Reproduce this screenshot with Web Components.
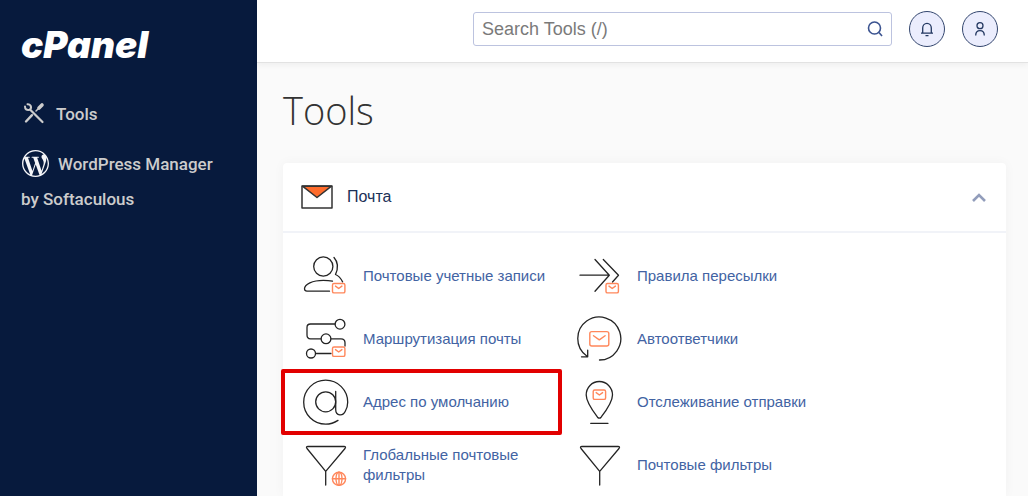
<!DOCTYPE html>
<html lang="ru">
<head>
<meta charset="utf-8">
<meta name="viewport" content="width=device-width, initial-scale=1">
<title>cPanel - Tools</title>
<style>
  body { margin: 0; font-family: "Liberation Sans", Arial, sans-serif; font-size: 16px; background: #fafafa; }
</style>
</head>
<body>
<cp-app>
  <cp-sidebar slot="side">
    <cp-nav-link icon="tools">Tools</cp-nav-link>
    <cp-nav-link icon="wordpress">WordPress Manager by Softaculous</cp-nav-link>
  </cp-sidebar>
  <cp-topbar slot="top"></cp-topbar>
  <cp-heading>Tools</cp-heading>
  <cp-group>
    <span slot="title">Почта</span>
    <cp-tool icon="accounts">Почтовые учетные записи</cp-tool>
    <cp-tool icon="forward">Правила пересылки</cp-tool>
    <cp-tool icon="routing">Маршрутизация почты</cp-tool>
    <cp-tool icon="reply">Автоответчики</cp-tool>
    <cp-tool icon="at" marked>Адрес по умолчанию</cp-tool>
    <cp-tool icon="track">Отслеживание отправки</cp-tool>
    <cp-tool icon="globalfilter">Глобальные почтовые фильтры</cp-tool>
    <cp-tool icon="filter">Почтовые фильтры</cp-tool>
  </cp-group>
</cp-app>
<script>
const smallMail = (x, y) => `<g class="o"><rect x="${x}" y="${y}" width="12.4" height="9.4" rx="1.5"/><path d="M${x + 3} ${y + 2.6}l3.2 2.4 3.2-2.4"/></g>`;
const funnel = '<path d="M7 5.5H43q2.4 0 1 2L24.7 30.3 6 7.5q-1.400-2 1-2zM24.700 30.300V44"/>';
const toolIcons = {
  accounts: '<circle cx="22.300" cy="14.500" r="9.600"/><path d="M33 5.500c4.200 4.700 4.200 11 1.500 17 3 1.200 5.400 4 7.100 7.400M28.500 39.200H6q-2.500 0-2.500-2.400c0-4.700 8-8.500 18.800-8.500q5 0 9.200.9"/>' + smallMail(31.500, 31.500),
  routing: '<circle cx="39" cy="9.200" r="4.900"/><circle cx="25" cy="23.800" r="4.900"/><circle cx="10" cy="38.500" r="4.500"/><path d="M34 9H9.500Q6 9 6 12.500V20q0 3.800 3.500 3.800H20M30 23.800H40q4 0 4 4V31M14.700 38.500H30"/>' + smallMail(31.500, 32),
  at: '<circle cx="24.700" cy="23.800" r="10"/><path d="M34.700 13.500V31.500c0 6.800 7.500 6.800 9.700 1.500 1.700-3 2.300-6 2.300-8.800a22 22 0 1 0-22 22q6.500 0 12.300-3.800"/>',
  globalfilter: funnel + '<g class="o"><circle cx="38" cy="37.800" r="6.600"/><ellipse cx="38" cy="37.800" rx="3" ry="6.600"/><path d="M31.500 37.800h13M38 31.200v13.200"/></g>',
  filter: funnel,
  forward: '<path d="M5 23.200H34.300M20 7.500L34.300 23.200 20 39.200M28.300 7.500L43.500 23.200 37.500 30"/>' + smallMail(31, 31.500),
  reply: '<path d="M24.500 45A21.500 21.500 0 1 0 11.500 40.800M12.700 35.200V41.800H6.500"/><g class="o"><rect x="14.800" y="16.600" width="19" height="14.400" rx="2"/><path d="M18.500 20.700l5.800 4.200 5.800-4.200"/></g>',
  track: '<path d="M24.300 3.500C17 3.500 11.200 9.500 11.200 17c0 7 7 16.500 11.300 22.200q1.800 2 3.600 0C30.500 33.500 37.500 24 37.500 17c0-7.500-5.900-13.500-13.200-13.500zM15.700 45.300H33"/>' + smallMail(18.2, 12)
};
const navIcons = {
  tools: '<svg width="22" height="22" viewBox="0 0 22 22" fill="none" stroke="#ccc" stroke-linecap="round"><path d="M2 4.500Q2 8.500 6.500 7.800Q9 6.500 7.500 3.500Q6.500 2 4.500 2.200" stroke-width="2"/><path d="M7.500 8L19.500 20" stroke-width="2.200"/><path d="M9 13.200L3 19.500" stroke-width="2.400"/><path d="M13 9L16 6" stroke-width="1.500"/><path d="M16 6L19 3" stroke-width="3.600"/></svg>',
  wordpress: '<svg width="27" height="27" viewBox="0 0 24 24" fill="#f4f5f8"><path d="M21.469 6.825c.84 1.537 1.318 3.300 1.318 5.175 0 3.979-2.156 7.456-5.363 9.325l3.295-9.527c.615-1.540.82-2.771.82-3.864 0-.405-.026-.78-.07-1.110m-7.981.105c.647-.03 1.232-.105 1.232-.105.582-.075.514-.93-.067-.899 0 0-1.755.135-2.880.135-1.064 0-2.850-.15-2.850-.15-.585-.03-.661.855-.075.885 0 0 .54.061 1.125.09l1.680 4.605-2.370 7.080L5.354 6.900c.649-.03 1.234-.1 1.234-.1.585-.075.516-.93-.065-.896 0 0-1.746.138-2.874.138-.2 0-.438-.008-.69-.015C4.911 3.150 8.235 1.215 12 1.215c2.809 0 5.365 1.072 7.286 2.833-.046-.003-.091-.009-.141-.009-1.060 0-1.812.923-1.812 1.914 0 .89.513 1.643 1.060 2.531.411.72.89 1.643.89 2.977 0 .915-.354 1.994-.821 3.479l-1.075 3.585-3.900-11.610.001.014zM12 22.784c-1.059 0-2.081-.153-3.048-.437l3.237-9.406 3.315 9.087c.024.053.05.101.078.149-1.120.393-2.325.609-3.582.609M1.211 12c0-1.564.336-3.050.935-4.390L7.290 21.709C3.694 19.960 1.212 16.271 1.211 12M12 0C5.385 0 0 5.385 0 12s5.385 12 12 12 12-5.385 12-12S18.615 0 12 0"/></svg>'
};

function define(name, render) {
  customElements.define(name, class extends HTMLElement {
    constructor() { super(); this.attachShadow({ mode: 'open' }); }
    connectedCallback() {
      const t = document.createElement('template');
      t.innerHTML = render(this);
      this.shadowRoot.replaceChildren(t.content.cloneNode(true));
    }
  });
}

define('cp-app', () => `
<style>
  :host { display: grid; grid-template-columns: 257px minmax(0, 1fr); min-height: 100vh; }
  .body { display: flex; flex-direction: column; }
  main { flex: 1; display: flex; flex-direction: column; padding: 19px 22px 0 26px; }
</style>
<slot name="side"></slot>
<div class="body"><slot name="top"></slot><main><slot></slot></main></div>`);

define('cp-sidebar', () => `
<style>
  :host { display: block; background: #071a3d; padding: 23px 32px 24px 21px; }
  .logo { display: block; margin-bottom: 30px; color: #fff; font: italic 900 37px/44px Inter, sans-serif; text-decoration: none; }
  nav { display: flex; flex-direction: column; gap: 15px; }
</style>
<a class="logo" href="#">cPanel</a>
<nav><slot></slot></nav>`);

define('cp-nav-link', el => `
<style>
  :host { display: block; }
  a { display: block; color: #ccc; font: 500 17px/35px Roboto, sans-serif; text-decoration: none; }
  svg { vertical-align: -7px; margin: 0 9px 0 1px; }
  :host([icon="tools"]) svg { vertical-align: -4px; margin: 0 11px 0 2px; }
</style>
<a href="#">${navIcons[el.getAttribute('icon')]}<slot></slot></a>`);

define('cp-topbar', () => `
<style>
  :host { display: flex; align-items: center; justify-content: flex-end; gap: 17px; box-sizing: border-box; height: 63px; padding: 0 30px 5px; background: #fff; border-bottom: 1px solid #e2e2e2; box-shadow: 0 2px 6px #0000000d; }
  .search { display: flex; box-sizing: border-box; width: 419px; height: 34px; border: 1px solid #bcc3df; border-radius: 3px; background: #fff; }
  input { flex: 1; min-width: 0; padding: 0 8px; border: 0; background: none; font: 18px/32px "Liberation Sans", Arial, sans-serif; outline: 0; }
  input::placeholder { color: #7a7a7a; opacity: 1; }
  button { display: grid; place-items: center; padding: 0; border: 0; background: none; }
  .search button { width: 32px; }
  .round { width: 36px; height: 36px; border: 1px solid #33466e; border-radius: 50%; background: #ebedfd; }
  svg { fill: none; stroke: #243962; }
</style>
<form class="search" role="search">
  <input type="text" aria-label="Search Tools" placeholder="Search Tools (/)">
  <button type="button" aria-label="Search"><svg width="18" height="18" viewBox="0 0 18 18" style="stroke:#3b5390" stroke-width="1.600"><circle cx="8.500" cy="8" r="6"/><path d="M13 12.500L16 16"/></svg></button>
</form>
<button class="round" aria-label="Notifications"><svg width="16" height="18" viewBox="0 0 16 18" stroke-width="1.300"><path d="M2 13.200H14M3.700 13V8a4.300 4.600 0 0 1 8.600 0v5M6.500 15.700h3"/></svg></button>
<button class="round" aria-label="Account"><svg width="16" height="18" viewBox="0 0 16 18" stroke-width="1.300"><circle cx="8" cy="5.700" r="3"/><path d="M3.700 15.500c0-6.500 8.600-6.500 8.600 0"/></svg></button>`);

define('cp-heading', () => `
<style>
  :host { display: block; }
  h1 { margin: 0 0 25px; color: #333; font: 300 38px/56px "Open Sans", sans-serif; }
</style>
<h1><slot></slot></h1>`);

define('cp-group', () => `
<style>
  :host { display: block; flex: 1; background: #fff; border-radius: 4px 4px 0 0; box-shadow: 0 0 12px #0000000a; }
  header { display: flex; align-items: center; gap: 14px; height: 68px; padding: 0 18px; border-bottom: 2px solid #f1f3f8; }
  h2 { flex: 1; margin: 0; color: #1b3157; font-size: 16px; line-height: 20px; font-weight: 400; }
  button { display: block; padding: 0; border: 0; background: none; }
  svg { display: block; fill: none; }
  .tools { display: grid; grid-template-columns: repeat(auto-fill, 274px); grid-auto-rows: 63px; padding-top: 11px; }
</style>
<header>
  <svg width="32" height="24" viewBox="0 0 32 24" stroke="#333" stroke-width="1.500" stroke-linejoin="round"><rect x="1" y="1" width="30" height="22"/><path d="M1.500 1.200H30.500L16 12.500z" fill="#ff6c2c"/></svg>
  <h2><slot name="title"></slot></h2>
  <button aria-label="Collapse" aria-expanded="true"><svg width="18" height="12" viewBox="0 0 18 12" stroke="#929dbb" stroke-width="2.600"><path d="M3 10L9 4 15 10"/></svg></button>
</header>
<div class="tools"><slot></slot></div>`);

define('cp-tool', el => `
<style>
  :host { display: flex; position: relative; }
  a { flex: 1; display: flex; align-items: center; gap: 14px; padding-left: 18px; color: #4263a3; font-size: 15px; line-height: 20px; text-decoration: none; }
  svg { flex: none; fill: none; stroke: #242424; stroke-width: 1.300; stroke-linecap: round; stroke-linejoin: round; }
  .o { stroke: #ff875b; stroke-width: 1.400; }
  :host([marked])::after { content: ""; position: absolute; inset: -1px -5px -2px -2px; border: 4px solid #e20000; border-radius: 2px; pointer-events: none; }
</style>
<a href="#"><svg width="48" height="48" viewBox="0 0 48 48" aria-hidden="true">${toolIcons[el.getAttribute('icon')]}</svg><span><slot></slot></span></a>`);
</script>
</body>
</html>
